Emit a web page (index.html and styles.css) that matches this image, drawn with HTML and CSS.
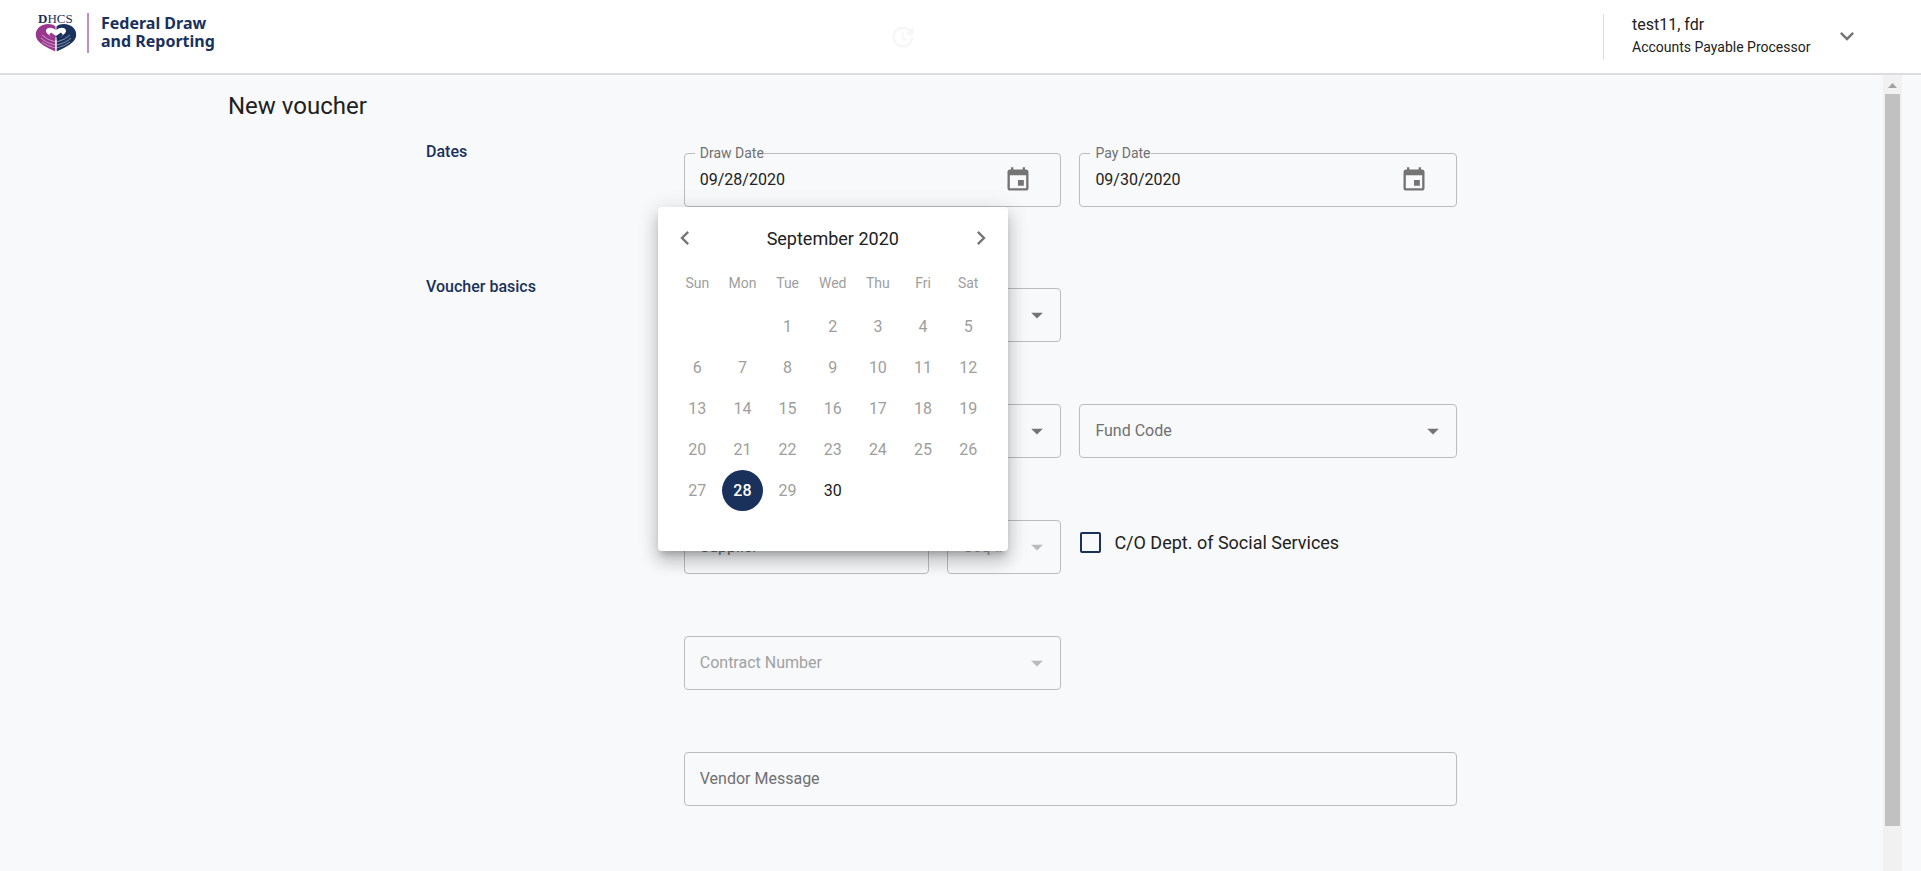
FILE: index.html
```html
<!DOCTYPE html>
<html lang="en">
<head>
<meta charset="utf-8">
<title>Federal Draw and Reporting</title>
<link rel="stylesheet" href="styles.css">
</head>
<body>
<header class="topbar">
  <a class="brand" href="#">
    <svg class="brand-logo" width="42" height="40" viewBox="0 0 42 40" role="img" aria-label="DHCS">
      <text x="3" y="10" class="logo-text"><tspan class="logo-d">D</tspan>HCS</text>
      <path d="M20.500 13.500C17 10.500 12 10.500 8 12C3 14 0 18 1 23.500C2 30 12 34.500 20.500 38.500Z" fill="#99378f"/>
      <path d="M21.500 13.500C25 10.500 30 10.500 34 12C39 14 42 18 41 23.500C40 30 30 34.500 21.500 38.500Z" fill="#19315b"/>
      <path d="M21 26C17 24 11 21 11 18C11 14 18 13.500 21 17.500C24 13.500 31 14 31 18C31 21 25 24 21 26Z" fill="#fff"/>
      <path d="M16 19.500l5 3.500v4l-7-5z" fill="#99378f"/>
      <path d="M26 19.500l-5 3.500v4l7-5z" fill="#19315b"/>
      <path d="M7 22Q12 27 20.500 29M6 25Q11 30 20.500 32M7 29Q12 33 20.500 35M35 22Q30 27 21.500 29M36 25Q31 30 21.500 32M35 29Q30 33 21.500 35" fill="none" stroke="#fff" stroke-opacity=".6" stroke-width=".8"/>
      <path d="M21 24v15" stroke="#fff" stroke-width="1"/>
    </svg>
    <span class="brand-name">Federal Draw<br>and Reporting</span>
  </a>
  <svg class="update" width="28" height="28" viewBox="0 0 24 24" aria-hidden="true"><path d="M21 10.120h-6.780l2.740-2.820c-2.730-2.700-7.150-2.800-9.880-.1-2.730 2.710-2.730 7.080 0 9.790s7.150 2.710 9.880 0C18.320 15.650 19 14.080 19 12.100h2c0 1.980-.88 4.550-2.640 6.290-3.510 3.480-9.210 3.480-12.720 0-3.500-3.470-3.530-9.110-.02-12.580s9.140-3.470 12.650 0L21 3v7.120zM12.500 8v4.250l3.500 2.080-.72 1.210L11 13V8h1.500z"/></svg>
  <button class="account" type="button">
    <span class="account-text"><span class="account-name">test11, fdr</span><span class="account-role">Accounts Payable Processor</span></span>
    <svg width="28" height="28" viewBox="0 0 24 24" aria-hidden="true"><path d="M7.410 8.590L12 13.170l4.590-4.580L18 10l-6 6-6-6z"/></svg>
  </button>
</header>
<div class="view">
  <main class="page">
    <h1>New voucher</h1>
    <form class="voucher">
      <section class="group">
        <h2>Dates</h2>
        <div class="rows">
          <div class="field">
            <label class="float" for="draw">Draw Date</label>
            <input id="draw" type="text" value="09/28/2020">
            <button class="icon-btn" type="button" aria-label="Choose draw date"><svg width="28" height="28" viewBox="0 0 24 24"><path d="M17 12h-5v5h5v-5zM16 1v2H8V1H6v2H5c-1.110 0-1.990.9-1.990 2L3 19c0 1.100.89 2 2 2h14c1.100 0 2-.9 2-2V5c0-1.100-.9-2-2-2h-1V1h-2zm3 18H5V8h14v11z"/></svg></button>
            <div class="calendar" role="dialog" aria-label="Choose date">
              <div class="cal-head">
                <button type="button" aria-label="Previous month"><svg width="28" height="28" viewBox="0 0 24 24"><path d="M15.410 7.410L14 6l-6 6 6 6 1.410-1.410L10.830 12z"/></svg></button>
                <span>September 2020</span>
                <button type="button" aria-label="Next month"><svg width="28" height="28" viewBox="0 0 24 24"><path d="M10 6L8.590 7.410 13.170 12l-4.580 4.590L10 18l6-6z"/></svg></button>
              </div>
              <table>
                <thead><tr><th>Sun</th><th>Mon</th><th>Tue</th><th>Wed</th><th>Thu</th><th>Fri</th><th>Sat</th></tr></thead>
                <tbody>
                <tr><td></td><td></td><td><button type="button" disabled>1</button></td><td><button type="button" disabled>2</button></td><td><button type="button" disabled>3</button></td><td><button type="button" disabled>4</button></td><td><button type="button" disabled>5</button></td></tr>
                <tr><td><button type="button" disabled>6</button></td><td><button type="button" disabled>7</button></td><td><button type="button" disabled>8</button></td><td><button type="button" disabled>9</button></td><td><button type="button" disabled>10</button></td><td><button type="button" disabled>11</button></td><td><button type="button" disabled>12</button></td></tr>
                <tr><td><button type="button" disabled>13</button></td><td><button type="button" disabled>14</button></td><td><button type="button" disabled>15</button></td><td><button type="button" disabled>16</button></td><td><button type="button" disabled>17</button></td><td><button type="button" disabled>18</button></td><td><button type="button" disabled>19</button></td></tr>
                <tr><td><button type="button" disabled>20</button></td><td><button type="button" disabled>21</button></td><td><button type="button" disabled>22</button></td><td><button type="button" disabled>23</button></td><td><button type="button" disabled>24</button></td><td><button type="button" disabled>25</button></td><td><button type="button" disabled>26</button></td></tr>
                <tr><td><button type="button" disabled>27</button></td><td><button type="button" class="selected">28</button></td><td><button type="button" disabled>29</button></td><td><button type="button">30</button></td><td></td><td></td><td></td></tr>
                </tbody>
              </table>
            </div>
          </div>
          <div class="field">
            <label class="float" for="pay">Pay Date</label>
            <input id="pay" type="text" value="09/30/2020">
            <button class="icon-btn" type="button" aria-label="Choose pay date"><svg width="28" height="28" viewBox="0 0 24 24"><path d="M17 12h-5v5h5v-5zM16 1v2H8V1H6v2H5c-1.110 0-1.990.9-1.990 2L3 19c0 1.100.89 2 2 2h14c1.100 0 2-.9 2-2V5c0-1.100-.9-2-2-2h-1V1h-2zm3 18H5V8h14v11z"/></svg></button>
          </div>
        </div>
      </section>
      <section class="group">
        <h2>Voucher basics</h2>
        <div class="rows">
          <div class="field first">
            <select aria-label="Voucher type"><option></option></select>
            <svg class="caret" width="28" height="28" viewBox="0 0 24 24"><path d="M7 10l5 5 5-5z"/></svg>
          </div>
          <div class="field first">
            <select aria-label="Program"><option></option></select>
            <svg class="caret" width="28" height="28" viewBox="0 0 24 24"><path d="M7 10l5 5 5-5z"/></svg>
          </div>
          <div class="field">
            <select aria-label="Fund Code"><option>Fund Code</option></select>
            <svg class="caret" width="28" height="28" viewBox="0 0 24 24"><path d="M7 10l5 5 5-5z"/></svg>
          </div>
          <div class="split">
            <div class="field"><input type="text" aria-label="Supplier" placeholder="Supplier"></div>
            <div class="field disabled">
              <select aria-label="Seq #" disabled><option>Seq #</option></select>
              <svg class="caret" width="28" height="28" viewBox="0 0 24 24"><path d="M7 10l5 5 5-5z"/></svg>
            </div>
          </div>
          <label class="check"><input type="checkbox"><span>C/O Dept. of Social Services</span></label>
          <div class="field first disabled">
            <select aria-label="Contract Number" disabled><option>Contract Number</option></select>
            <svg class="caret" width="28" height="28" viewBox="0 0 24 24"><path d="M7 10l5 5 5-5z"/></svg>
          </div>
          <div class="field wide"><input type="text" aria-label="Vendor Message" placeholder="Vendor Message"></div>
        </div>
      </section>
    </form>
  </main>
  <div class="scrollbar" aria-hidden="true">
    <svg width="19" height="19" viewBox="0 0 19 19"><path d="M5 13l4.500-5 4.500 5z" fill="#a3a3a3"/></svg>
    <div class="thumb"></div>
  </div>
</div>
</body>
</html>
```

FILE: styles.css
```css
* { box-sizing: border-box; }
body {
  margin: 0;
  min-height: 100vh;
  display: flex;
  flex-direction: column;
  font-family: Roboto, "Liberation Sans", sans-serif;
  font-size: 16px;
  color: #212121;
  background: #f8f9fb;
}
button, input, select { font: inherit; color: inherit; }
button { border: 0; padding: 0; background: none; }
svg { display: block; flex: none; }

.topbar {
  display: grid;
  grid-template-columns: 19fr auto 21fr;
  align-items: center;
  height: 75px;
  padding: 0 60px 0 35px;
  background: #fff;
  border-bottom: 2px solid #dcdde2;
}
.brand {
  display: flex;
  align-items: center;
  gap: 10px;
  margin-bottom: 8px;
  color: #19315b;
  text-decoration: none;
}
.brand-name {
  padding: 1px 0 3px 12px;
  border-left: 2px solid #c98bc2;
  font-family: "Noto Sans", sans-serif;
  font-weight: 700;
  font-size: 16px;
  line-height: 18px;
}
.logo-text { font-family: "Liberation Serif", serif; font-size: 13px; fill: #19315b; }
.logo-d { font-weight: 700; }
.update { fill: #f6f6f6; }
.account {
  justify-self: end;
  display: flex;
  align-items: center;
  justify-content: space-between;
  width: 258px;
  padding: 0 0 2px 28px;
  border-left: 1px solid #dcdde2;
  text-align: left;
}
.account svg { fill: #757575; }
.account-text { display: flex; flex-direction: column; }
.account-name { line-height: 22px; }
.account-role { font-size: 14px; line-height: 22px; }

.view { flex: 1; display: flex; padding-right: 19px; }
.page { flex: 1; padding: 15px 0 60px; }
h1 {
  max-width: 1427px;
  margin: 0 auto 20px;
  font-size: 24px;
  line-height: 32px;
  font-weight: 400;
}
.voucher { max-width: 1031px; margin: 0 auto; }
.group { display: grid; grid-template-columns: 1fr 3fr; }
.group + .group { margin-top: 70px; }
h2 { margin: 0; font-size: 16px; line-height: 20px; font-weight: 500; color: #19315b; }
.rows {
  display: grid;
  grid-template-columns: 1fr 1fr;
  gap: 62px 18px;
  padding-top: 11px;
}
.field {
  position: relative;
  display: flex;
  align-items: center;
  height: 54px;
  border: 1px solid #bbbcbe;
  border-radius: 4px;
}
.first { grid-column: 1; }
.wide { grid-column: 1 / 3; }
.split { display: grid; grid-template-columns: 245fr 114fr; gap: 18px; }
.field input, .field select {
  flex: 1;
  width: 100%;
  height: 100%;
  min-width: 0;
  padding: 0 15px 2px;
  border: 0;
  outline: 0;
  background: none;
  appearance: none;
}
.field input::placeholder { color: #6f7072; opacity: 1; }
.field select { color: #6f7072; }
.field.disabled select { color: #a0a1a3; opacity: 1; }
.float {
  position: absolute;
  top: -10px;
  left: 10px;
  padding-left: 5px;
  font-size: 14px;
  line-height: 18px;
  color: #6f7072;
  background: #f8f9fb;
}
.icon-btn { margin-right: 28px; }
.icon-btn svg, .caret { fill: #747474; }
.caret { position: absolute; right: 9px; pointer-events: none; }
.disabled .caret { fill: #b9babb; }
.check {
  display: flex;
  align-items: center;
  gap: 13px;
  height: 44px;
  font-size: 18px;
}
.check input {
  appearance: none;
  width: 21px;
  height: 21px;
  margin: 0 0 0 1px;
  border: 2px solid #19315b;
  border-radius: 2px;
}

.calendar {
  position: absolute;
  z-index: 2;
  top: 53px;
  left: -27px;
  width: 350px;
  height: 344px;
  padding: 11px 17px;
  border-radius: 4px;
  background: #fff;
  box-shadow: 0 6px 6px -3px rgba(0,0,0,.2), 0 11px 16px 1px rgba(0,0,0,.14), 0 4px 20px 3px rgba(0,0,0,.12);
}
.cal-head {
  display: flex;
  align-items: center;
  justify-content: space-between;
  height: 40px;
  margin: 0 -4px;
  font-size: 18px;
}
.cal-head svg { fill: #757575; }
.calendar table { width: 100%; border-collapse: collapse; table-layout: fixed; }
.calendar th { height: 48px; padding: 2px 0 0; font-size: 14px; font-weight: 400; color: #9e9e9e; }
.calendar td { height: 41px; padding: 0; text-align: center; }
.calendar td button { width: 41px; height: 41px; border-radius: 50%; display: block; margin: auto; }
.calendar td button:disabled { color: #9e9e9e; }
.calendar td .selected { background: #19315b; color: #fff; font-weight: 500; }

.scrollbar {
  display: flex;
  flex-direction: column;
  width: 19px;
  background: #f1f1f1;
}
.thumb { flex: 0 0 92%; margin: 0 2px; background: #c1c1c1; }
```
